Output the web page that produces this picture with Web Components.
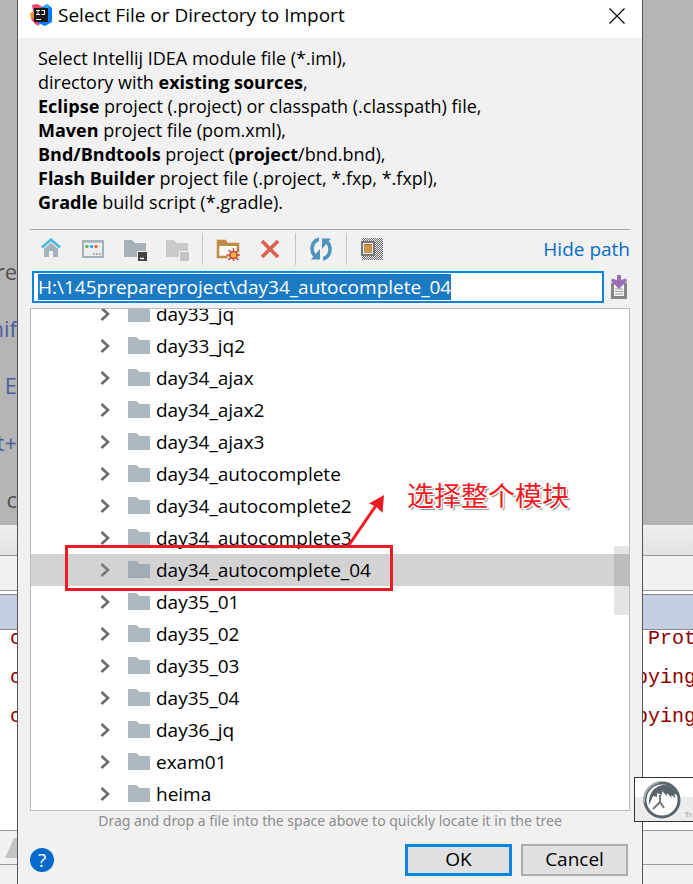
<!DOCTYPE html>
<html lang="en">
<head>
<meta charset="utf-8">
<title>Select File or Directory to Import</title>
<style>
html, body { margin: 0; height: 100%; }
body { font: 19px/24px "Open Sans", "Noto Sans", "Noto Sans CJK SC", sans-serif; color: #000; overflow: hidden; background: #b5b5b5; }
</style>
</head>
<body>
<import-screen></import-screen>
<script>
const define = (name, html, setup) => customElements.define(name, class extends HTMLElement {
  constructor() {
    super();
    const t = document.createElement('template');
    t.innerHTML = html;
    this.attachShadow({ mode: 'open' }).append(t.content.cloneNode(true));
  }
  connectedCallback() { if (setup) setup(this, this.shadowRoot); }
});

define('ide-backdrop', `
<style>
:host { display: grid; grid-template-columns: 17px 1fr 50px; grid-template-rows: 525px 31px 34px 4px 36px 200px 35px 1fr; background: #f1f1f1; overflow: hidden; }
.band { grid-column: 1 / -1; box-sizing: border-box; }
.editor { grid-row: 1; background: #b5b5b5; }
.tabs { grid-row: 2; background: linear-gradient(#efefef, #e2e2e2); border-bottom: 1px solid #999; }
.head { grid-row: 3; background: #f1f1f1; }
.gap { grid-row: 4; background: #fff; border-top: 1px solid #999; }
.blue { grid-row: 5; background: #c5cee0; border: solid #888; border-width: 1px 0; }
.console { grid-row: 6; background: #fff; }
.foot { grid-row: 7; border: solid #999; border-width: 1px 0; }
.words { grid-area: 1 / 1; display: flex; flex-direction: column; align-items: flex-end; padding-top: 243px; font-size: 22px; line-height: 57px; color: #4d5f9b; overflow: hidden; white-space: nowrap; }
.words span { height: 57px; }
.dark { color: #505050; }
.log { grid-row: 6; font: 20px/39px "Liberation Mono", monospace; color: #8b0000; overflow: hidden; white-space: pre; margin-top: -11px; clip-path: inset(11px 0 0 0); }
.log div { height: 39px; }
.l { grid-column: 1; padding-left: 10px; }
.r { grid-column: 3; text-indent: -7px; }
svg { grid-area: 7 / 1; justify-self: end; align-self: center; }
</style>
<div class="band editor"></div><div class="band tabs"></div><div class="band head"></div><div class="band gap"></div>
<div class="band blue"></div><div class="band console"></div><div class="band foot"></div>
<div class="words"><span class="dark">re</span><span>nif</span><span>E</span><span>t+</span><span class="dark">c</span></div>
<div class="log l"><div>c</div><div>c</div><div>c</div></div>
<div class="log r"><div> Prot</div><div>pying</div><div>pying</div></div>
<svg width="12" height="20"><path d="M0 20 L9 0 H12 V20Z" fill="#c4c4c4"/></svg>
`);

define('title-bar', `
<style>
:host { display: flex; align-items: flex-start; gap: 6px; height: 38px; padding: 0 17px 0 12px; box-sizing: border-box; background: #fff; }
h1 { flex: 1; margin: 3px 0 0; font-size: 19px; line-height: 24px; font-weight: 400; }
svg { display: block; }
.logo { margin-top: 4px; }
button { border: 0; background: none; padding: 0; margin-top: 8px; }
</style>
<svg class="logo" width="22" height="22" viewBox="0 0 22 22"><path d="M2 1 7 0 13 3 9 22 5 20 1 15 4 12Z" fill="#f4456f"/><path d="M0 9 4 8 6 14 1 15Z" fill="#f88a28"/><path d="M12 3 17 0 22 4V18L15 22 8 19Z" fill="#087cfa"/><path d="M13 3 17 0 20 5Z" fill="#20b7f4"/><rect x="4" y="4" width="14" height="14" fill="#191919"/><path d="M6 6.500h4M8 6.500v4M6 10.500h4M11.500 6.500h3.500M14.500 6.500v4h-3M6 15.500h5" fill="none" stroke="#fff"/></svg>
<h1><slot></slot></h1>
<button aria-label="Close"><svg width="16" height="16" viewBox="0 0 16 16"><path d="M.5.5 15.5 15.5M15.5.5.5 15.5" stroke="#000" stroke-width="1.2"/></svg></button>
`);

define('tool-button', `
<style>
:host { display: block; flex: 0 0 42px; }
button { display: grid; place-items: center; width: 100%; height: 32px; padding: 0; border: 0; background: none; }
::slotted(svg) { display: block; }
</style>
<button><slot></slot></button>
`, (el, root) => root.querySelector('button').setAttribute('aria-label', el.getAttribute('label')));

define('file-toolbar', `
<style>
:host { display: flex; align-items: center; height: 32px; padding: 3px 0 6px; border-top: 1px solid #aaa; }
i { width: 1px; height: 32px; margin: 0 4px; background: #c4c4c4; }
a { margin-left: auto; color: #0a6cc4; text-decoration: none; }
</style>
<tool-button label="Home"><svg width="20" height="22" viewBox="0 0 20 22"><path d="M3 11 10 4.500 17 11V19H12V13H8V19H3Z" fill="#a6b2ba"/><path d="M1 9.500 10 1.500 19 9.500" fill="none" stroke="#45b6e0" stroke-width="2.400"/></svg></tool-button>
<tool-button label="Desktop"><svg width="22" height="20" viewBox="0 0 22 20"><rect x="1" y="2" width="20" height="16" fill="#eceff1" stroke="#a6b2ba" stroke-width="2"/><path d="M1 2.500H21" stroke="#a6b2ba" stroke-width="2.500"/><circle cx="5" cy="7.500" r="1.700" fill="#5cb84a"/><circle cx="9.500" cy="7.500" r="1.700" fill="#36a9dd"/><circle cx="14" cy="7.500" r="1.700" fill="#f26a35"/><path d="M11 15h2m1 0h2m1 0h2" stroke="#999" stroke-width="1.500"/></svg></tool-button>
<tool-button label="Project directory"><svg width="24" height="24" viewBox="0 0 24 24"><path d="M1 3H9L12 6H23V20H1Z" fill="#a6b2ba"/><path d="M14 14h10v10H14Z" fill="#f1f1f1"/><rect x="15" y="15" width="9" height="9" fill="#404244"/><path d="M17 21.500h4" stroke="#fff" stroke-width="1.500"/></svg></tool-button>
<tool-button label="Module directory"><svg width="24" height="24" viewBox="0 0 24 24"><path d="M1 3H9L12 6H23V20H1Z" fill="#cacaca"/><path d="M14 14h10v10H14Z" fill="#f1f1f1"/><rect x="15" y="15" width="9" height="9" fill="#c5c5c5"/></svg></tool-button>
<i></i>
<tool-button label="New folder"><svg width="24" height="24" viewBox="0 0 24 24"><path d="M2 20V4H9L11 7H22V20Z" fill="#fafafa" stroke="#bf8b42" stroke-width="2.500"/><path d="M1 3H9L11 6H23V9H1Z" fill="#bf8b42"/><circle cx="17.500" cy="18" r="6.500" fill="#f1f1f1" opacity=".7"/><path d="M17.500 11v14M10.500 18h14M12.500 13l10 10M22.500 13l-10 10" stroke="#c54a32" stroke-width="1.400"/><circle cx="17.500" cy="18" r="3.500" fill="#f1b14b" stroke="#c54a32" stroke-width="1.500"/></svg></tool-button>
<tool-button label="Delete"><svg width="20" height="20" viewBox="0 0 20 20"><path d="M2 2 18 18M18 2 2 18" stroke="#db6050" stroke-width="3.600"/></svg></tool-button>
<i></i>
<tool-button label="Refresh"><svg width="24" height="24" viewBox="0 0 24 24"><g fill="none" stroke="#4d94be" stroke-width="3.600"><path d="M10 2.500H9Q3 5 3 12Q3 16 6 19"/><path d="M14 21.500H15Q21 19 21 12Q21 8 18 5"/></g><path d="M2 22.500H11V12Z M22 1.500H13V12Z" fill="#4d94be"/></svg></tool-button>
<i></i>
<tool-button label="Show hidden files"><svg width="24" height="24" viewBox="0 0 24 24"><defs><pattern id="k" width="2" height="2" patternUnits="userSpaceOnUse"><path d="M0 0h1v1H0ZM1 1h1v1H1Z" fill="#666"/></pattern></defs><rect x="2" y="1" width="21" height="22" fill="url(#k)"/><rect x="2" y="5" width="12" height="13" fill="#eee" stroke="#777" stroke-width="2"/><rect x="4" y="7" width="8" height="9" fill="#cc954a"/><path d="M4 7.500h8" stroke="#a87332"/></svg></tool-button>
<a href="#">Hide path</a>
`);

define('path-field', `
<style>
:host { display: flex; align-items: center; gap: 4px; padding: 0 1px 0 2px; }
input { flex: 1; min-width: 0; box-sizing: border-box; height: 32px; padding: 2px 4px; border: 2px solid #0a84dd; border-radius: 0; outline: 0; background: #fff; color: #000; font: inherit; line-height: 24px; }
input::selection { background: #1b7ac2; color: #fff; }
button { width: 21px; padding: 0; border: 0; background: none; }
svg { display: block; margin: auto; }
</style>
<input aria-label="Path" value="H:\\145prepareproject\\day34_autocomplete_04">
<button aria-label="Path history"><svg width="18" height="26" viewBox="0 0 18 26"><path d="M2.500 9V23.500H15.500V9" fill="#f8f8f8" stroke="#858585" stroke-width="3"/><path d="M5 15h8M5 17.500h8M5 20h8" stroke="#999"/><path d="M7 1H11V6L16 4.500 17 7 9 15 1 7 2 4.500 7 6Z" fill="#9a6fb6"/></svg></button>
`, (el, root) => root.querySelector('input').select());

define('tree-row', `
<style>
:host { display: flex; align-items: center; height: 32px; padding-left: 67px; position: relative; }
:host([selected]) { background: #d3d3d3; }
.arrow { margin-right: 16px; }
.folder { margin: 0 6px 0 0; }
:host([selected]) svg { opacity: .85; }
:host([selected]) .folder path { fill: #9ba6ae; }
svg { flex: none; display: block; }
</style>
<svg class="arrow" width="14" height="16" viewBox="0 0 14 16"><path d="M3.500 2 10 8 3.500 14" fill="none" stroke="#6a6a6a" stroke-width="2.600"/></svg>
<svg class="folder" width="22" height="18" viewBox="0 0 22 18"><path d="M0 0H8.500L11.500 3H22V17H0Z" fill="#adb8bf"/></svg>
<span><slot></slot></span><slot name="note"></slot>
`);

define('callout-note', `
<style>
:host { position: absolute; left: 34px; top: -74px; width: 520px; height: 112px; pointer-events: none; }
svg { display: block; }
.t { position: absolute; left: 342px; top: 0; font: 27px/30px "Noto Sans CJK SC", sans-serif; color: #ed1c24; white-space: nowrap; text-shadow: -1px -1px #fff, 1px -1px #fff, -1px 1px #fff, 1px 1px #fff, 2px 2px 1px #888; }
</style>
<svg width="520" height="112" viewBox="0 0 520 112" fill="none"><rect x="1.500" y="66.500" width="325" height="43" stroke="#ed1c24" stroke-width="3"/><path d="M284 65 312 24" stroke="#ed1c24" stroke-width="3"/><path d="M319 15 317.500 33 311 26.500 304 23.500Z" fill="#ed1c24"/></svg>
<div class="t"><slot></slot></div>
`);

define('file-tree', `
<style>
:host { display: block; position: relative; border: 1px solid #bbb; background: #fff; overflow: hidden; }
.rows { margin-top: -11px; }
.thumb { position: absolute; right: 0; top: 237px; width: 15px; height: 69px; background: rgba(0,0,0,.1); }
</style>
<div class="rows"><slot></slot></div><div class="thumb"></div>
`);

define('push-button', `
<style>
:host { display: block; width: 107px; }
button { width: 100%; height: 32px; padding: 0 0 3px; border: 2px solid #adadad; background: #e1e1e1; font: inherit; line-height: 22px; color: #000; }
:host([primary]) button { border-width: 3px; border-color: #0a84dd; }
</style>
<button><slot></slot></button>
`);

define('import-dialog', `
<style>
:host { display: flex; flex-direction: column; margin: 0 50px 0 17px; border: solid #555; border-width: 0 1px; background: #f1f1f1; overflow: hidden; }
main { display: flex; flex-direction: column; padding: 8px 12px 0; }
p { margin: 0 8px 15px; font-size: 18px; white-space: nowrap; }
path-field { margin-bottom: 5px; }
.hint { text-align: center; font: 14px/20px "Noto Sans", "Open Sans", sans-serif; color: #8c8c8c; white-space: nowrap; }
footer { display: flex; align-items: center; gap: 9px; padding: 13px 2px 0 0; }
.help { width: 24px; height: 24px; margin-right: auto; padding: 0; border: 0; border-radius: 50%; background: #0669cc; color: #fff; font: inherit; line-height: 24px; }
</style>
<title-bar>Select File or Directory to Import</title-bar>
<main>
<p>Select Intellij IDEA module file (*.iml),<br>directory with <b>existing sources</b>,<br><b>Eclipse</b> project (.project) or classpath (.classpath) file,<br><b>Maven</b> project file (pom.xml),<br><b>Bnd/Bndtools</b> project (<b>project</b>/bnd.bnd),<br><b>Flash Builder</b> project file (.project, *.fxp, *.fxpl),<br><b>Gradle</b> build script (*.gradle).</p>
<file-toolbar></file-toolbar>
<path-field></path-field>
<file-tree>
<tree-row>day33_jq</tree-row><tree-row>day33_jq2</tree-row><tree-row>day34_ajax</tree-row><tree-row>day34_ajax2</tree-row><tree-row>day34_ajax3</tree-row><tree-row>day34_autocomplete</tree-row><tree-row>day34_autocomplete2</tree-row><tree-row>day34_autocomplete3</tree-row><tree-row selected>day34_autocomplete_04<callout-note slot="note">选择整个模块</callout-note></tree-row><tree-row>day35_01</tree-row><tree-row>day35_02</tree-row><tree-row>day35_03</tree-row><tree-row>day35_04</tree-row><tree-row>day36_jq</tree-row><tree-row>exam01</tree-row><tree-row>heima</tree-row>
</file-tree>
<div class="hint">Drag and drop a file into the space above to quickly locate it in the tree</div>
<footer><button class="help" aria-label="Help">?</button><push-button primary>OK</push-button><push-button>Cancel</push-button></footer>
</main>
`);

define('brand-badge', `
<style>
:host { position: absolute; right: 0; top: 777px; width: 59px; height: 45px; box-sizing: border-box; border: 1px solid #333; border-right: 0; background: linear-gradient(#fff 45%, #ececec 45%); overflow: hidden; }
svg { display: block; }
</style>
<svg width="58" height="43" viewBox="0 0 58 43" fill="none"><circle cx="27" cy="22" r="17" fill="#fff" stroke="#59656a" stroke-width="3"/><path d="M9 25Q8 9 24 4" stroke="#aaa" stroke-width="2"/><path d="M14 27Q13 13 24 8Q36 4 43 17L39 16 41 20 36 17 37 20 32 15 32 18 27 13 27 17 22 15 22 19 18 18Z" fill="#59656a"/><path d="M18 31 25 24V17M25 24 29 30" stroke="#777" stroke-width="2"/><path d="M50 35h4M52 35v4M55 39v-4l2 2" stroke="#aaa"/></svg>
`);

define('import-screen', `
<style>
:host { display: grid; height: 100%; position: relative; overflow: hidden; }
ide-backdrop, import-dialog { grid-area: 1 / 1; min-width: 0; min-height: 0; }
</style>
<ide-backdrop></ide-backdrop><import-dialog></import-dialog><brand-badge></brand-badge>
`);
</script>
</body>
</html>
